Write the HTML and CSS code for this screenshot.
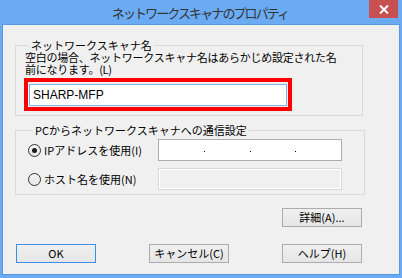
FILE: index.html
```html
<!DOCTYPE html>
<html lang="ja">
<head>
    <meta charset="UTF-8">
    <title>ネットワークスキャナのプロパティ</title>
    <link rel="stylesheet" href="styles.css">
</head>
<body>

    <div class="window">
        <div class="titlebar">
            <div class="title">ネットワークスキャナのプロパティ</div>
            <button class="close-btn" aria-label="閉じる">
                <svg width="10" height="9" viewBox="0 0 10 9">
                    <path d="M1 0.5 L9 8.5 M9 0.5 L1 8.5" stroke="#fff" stroke-width="2" fill="none"/>
                </svg>
            </button>
        </div>

        <div class="client">
            <fieldset class="group group-name">
                <legend>ネットワークスキャナ名</legend>
                <p class="hint">空白の場合、ネットワークスキャナ名はあらかじめ設定された名<br>前になります。(L)</p>
                <div class="highlight">
                    <div class="textbox focused">SHARP-MFP</div>
                </div>
            </fieldset>

            <fieldset class="group group-conn">
                <legend>PCからネットワークスキャナへの通信設定</legend>
                <div class="conn-row">
                    <span class="radio checked"></span>
                    <span class="radio-label">IPアドレスを使用(I)</span>
                    <div class="ip-box">
                        <span class="ip-seg"></span><span class="ip-dot"></span>
                        <span class="ip-seg"></span><span class="ip-dot"></span>
                        <span class="ip-seg"></span><span class="ip-dot"></span>
                        <span class="ip-seg"></span>
                    </div>
                </div>
                <div class="conn-row">
                    <span class="radio"></span>
                    <span class="radio-label">ホスト名を使用(N)</span>
                    <div class="textbox disabled"></div>
                </div>
            </fieldset>

            <div class="detail-row">
                <button class="btn">詳細(A)...</button>
            </div>

            <div class="action-row">
                <button class="btn default">OK</button>
                <button class="btn">キャンセル(C)</button>
                <button class="btn">ヘルプ(H)</button>
            </div>
        </div>
    </div>

</body>
</html>
```

FILE: styles.css
```css
:root {
    --frame-color: #6aabf4;
    --frame-edge: #5a98de;
    --client-bg: #f0f0f0;
    --group-border: #d9d9d9;
    --text-color: #000;
    --close-color: #c75050;
}

* { margin: 0; padding: 0; box-sizing: border-box; }

body {
    width: 402px;
    height: 278px;
    background-color: var(--frame-color);
    font-family: "Noto Sans CJK JP", "Liberation Sans", sans-serif;
    font-size: 11px;
    color: var(--text-color);
    overflow: hidden;
}

.window { display: flex; flex-direction: column; height: 100%; }

/* --- title bar --- */
.titlebar { height: 24px; display: flex; align-items: flex-start; }
.title {
    flex-grow: 1;
    padding-left: 31px;
    text-align: center;
    font-size: 13px;
    line-height: 26px;
    letter-spacing: -1.9px;
    color: #333;
}
.close-btn {
    width: 29px; height: 18px; margin-right: 4px;
    background-color: var(--close-color);
    border: none;
    display: flex; align-items: center; justify-content: center;
}

/* --- client area --- */
.client {
    margin: 0 2px 3px 2px;
    height: 251px;
    background-color: var(--client-bg);
    border: 1px solid var(--frame-edge);
    display: flex;
    flex-direction: column;
}

.group {
    border: 1px solid var(--group-border);
    margin-left: 12px;
    min-width: 0;
}
.group legend {
    margin-left: 5px;
    padding: 0 2px;
    line-height: 12px;
}

.group-name { width: 348px; margin-top: 14px; padding: 0 0 4px 8px; }
.hint {
    padding-left: 1px;
    line-height: 12px;
    letter-spacing: -0.25px;
    margin-bottom: 3px;
    white-space: nowrap;
}

.highlight {
    width: 268px;
    border: 4px solid #ff0000;
    padding: 2px 1px 1px 1px;
}
.textbox {
    height: 22px;
    background-color: #fff;
    border: 1px solid #abadb3;
    padding-left: 3px;
    font-family: "Liberation Sans", sans-serif;
    font-size: 12px;
    line-height: 20px;
}
.textbox.focused { border-color: #7eb4ea; }
.textbox.disabled {
    width: 184px;
    background-color: var(--client-bg);
    border-color: var(--group-border);
    box-shadow: inset 0 0 0 1px #fff;
}

.group-conn { width: 350px; margin-top: 8px; padding: 3px 0 4px 12px; }
.conn-row { display: flex; align-items: center; height: 22px; }
.conn-row + .conn-row { margin-top: 7px; }

.radio {
    width: 13px; height: 13px;
    border: 1px solid #333;
    border-radius: 50%;
    background: linear-gradient(#f4f4f4, #e6e6e6);
    display: flex; align-items: center; justify-content: center;
}
.radio.checked::after {
    content: "";
    width: 5px; height: 5px;
    border-radius: 50%;
    background-color: #1a1a1a;
}
.radio-label { width: 114px; margin-left: 3px; }

.ip-box {
    width: 184px; height: 22px;
    background-color: #fff;
    border: 1px solid #abadb3;
    display: flex; align-items: center;
}
.ip-seg { flex: 1; }
.ip-dot { width: 1px; height: 1px; background-color: #000; margin-top: 3px; }

/* --- buttons --- */
.btn {
    width: 80px; height: 19px;
    font-family: inherit;
    font-size: 11px;
    line-height: 15px;
    color: var(--text-color);
    background: linear-gradient(#f0f0f0, #e5e5e5);
    border: 1px solid #acacac;
}
.btn.default { border-color: #3c8ee6; }

.detail-row { display: flex; justify-content: flex-end; padding-right: 37px; margin-top: 13px; }
.action-row { display: flex; gap: 53px; padding-left: 13px; margin-top: 17px; }
```
